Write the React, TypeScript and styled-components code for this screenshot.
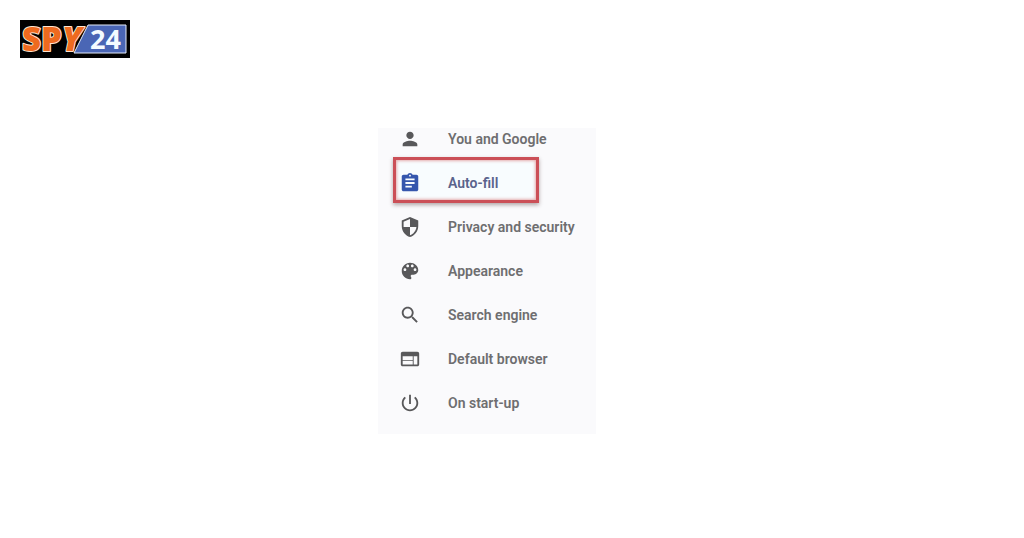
import React from "react";
import styled, { createGlobalStyle } from "styled-components";

const GlobalStyle = createGlobalStyle`
  body {
    margin: 0;
    background: #ffffff;
    font-family: Roboto, "Liberation Sans", sans-serif;
  }
`;

const Header = styled.header`
  padding: 20px;
`;

const LogoLink = styled.a`
  display: block;
  width: 110px;
  height: 38px;
  background: #000000;
`;

const LogoDrawing = styled.svg`
  display: block;
  overflow: visible;
  font-family: "Open Sans", "Noto Sans", sans-serif;
  font-weight: 700;
`;

const LogoName = styled.text`
  fill: #ee6a1f;
  stroke: #ffe6d2;
  stroke-width: 2px;
  stroke-linejoin: round;
  paint-order: stroke;
  font-size: 33px;
  font-weight: 800;
`;

const LogoNumber = styled.text`
  fill: #f4fbff;
  font-size: 27px;
`;

const Main = styled.main`
  display: flex;
  justify-content: center;
  padding: 50px 50px 50px 0;
`;

const Panel = styled.nav`
  width: 218px;
  background: #fafafc;
`;

const MenuList = styled.ul`
  display: flex;
  flex-direction: column;
  gap: 22px;
  margin: 0;
  padding: 0 0 20px 21px;
  list-style: none;
`;

const MenuLink = styled.a<{ $active?: boolean }>`
  position: relative;
  display: flex;
  align-items: center;
  gap: 27px;
  height: 22px;
  color: ${(p) => (p.$active ? "#5a638c" : "#6e6e70")};
  font-size: 14px;
  font-weight: 600;
  line-height: 22px;
  text-decoration: none;
  white-space: nowrap;
`;

const Highlight = styled.span`
  position: absolute;
  top: -15px;
  left: -6px;
  box-sizing: border-box;
  width: 146px;
  height: 46px;
  border: 3px solid #cb4f57;
  background: #f8fcfe;
  box-shadow: 0 2px 4px rgba(70, 40, 40, 0.4), inset 0 0 3px 1px rgba(215, 110, 110, 0.55);
`;

const Icon = styled.svg<{ $active?: boolean }>`
  position: relative;
  flex: none;
  width: 22px;
  height: 22px;
  fill: ${(p) => (p.$active ? "#3556ad" : "#58585a")};
`;

const Label = styled.span`
  position: relative;
`;

const items = [
  {
    label: "You and Google",
    path: "M12 12c2.21 0 4-1.79 4-4s-1.79-4-4-4-4 1.79-4 4 1.79 4 4 4zm0 2c-2.67 0-8 1.34-8 4v2h16v-2c0-2.66-5.33-4-8-4z",
  },
  {
    label: "Auto-fill",
    active: true,
    path: "M19 3h-4.18C14.4 1.84 13.3 1 12 1c-1.3 0-2.4.84-2.82 2H5c-1.1 0-2 .9-2 2v14c0 1.1.9 2 2 2h14c1.1 0 2-.9 2-2V5c0-1.1-.9-2-2-2zm-7 0c.55 0 1 .45 1 1s-.45 1-1 1-1-.45-1-1 .45-1 1-1zm2 14H7v-2h7v2zm3-4H7v-2h10v2zm0-4H7V7h10v2z",
  },
  {
    label: "Privacy and security",
    path: "M12 1L3 5v6c0 5.55 3.84 10.74 9 12 5.16-1.26 9-6.45 9-12V5l-9-4zm0 10.99h7c-.53 4.12-3.28 7.79-7 8.94V12H5V6.3l7-3.11v8.8z",
  },
  {
    label: "Appearance",
    path: "M12 3c-4.97 0-9 4.03-9 9s4.03 9 9 9c.83 0 1.5-.67 1.5-1.5 0-.39-.15-.74-.39-1.01-.23-.26-.38-.61-.38-.99 0-.83.67-1.5 1.5-1.5H16c2.76 0 5-2.24 5-5 0-4.42-4.03-8-9-8zm-5.5 9c-.83 0-1.5-.67-1.5-1.5S5.67 9 6.5 9 8 9.67 8 10.5 7.33 12 6.5 12zm3-4C8.67 8 8 7.33 8 6.5S8.67 5 9.5 5s1.5.67 1.5 1.5S10.33 8 9.5 8zm5 0c-.83 0-1.5-.67-1.5-1.5S13.67 5 14.5 5s1.5.67 1.5 1.5S15.33 8 14.5 8zm3 4c-.83 0-1.5-.67-1.5-1.5S16.67 9 17.5 9s1.5.67 1.5 1.5-.67 1.5-1.5 1.5z",
  },
  {
    label: "Search engine",
    path: "M15.5 14h-.79l-.28-.27C15.41 12.59 16 11.11 16 9.5 16 5.91 13.09 3 9.5 3S3 5.91 3 9.5 5.91 16 9.5 16c1.61 0 3.09-.59 4.23-1.57l.27.28v.79l5 4.99L20.49 19l-4.99-5zm-6 0C7.01 14 5 11.99 5 9.5S7.01 5 9.5 5 14 7.01 14 9.5 11.99 14 9.5 14z",
  },
  {
    label: "Default browser",
    path: "M20 4H4c-1.1 0-1.99.9-1.99 2L2 18c0 1.1.9 2 2 2h16c1.1 0 2-.9 2-2V6c0-1.1-.9-2-2-2zm-5 14H4v-4h11v4zm0-5H4V9h11v4zm5 5h-4V9h4v9z",
  },
  {
    label: "On start-up",
    path: "M13 3h-2v10h2V3zm4.83 2.17l-1.42 1.42C17.99 7.86 19 9.81 19 12c0 3.87-3.13 7-7 7s-7-3.13-7-7c0-2.19 1.01-4.14 2.58-5.42L6.17 5.17C4.23 6.82 3 9.26 3 12c0 4.97 4.03 9 9 9s9-4.03 9-9c0-2.74-1.23-5.18-3.17-6.83z",
  },
];

function Logo() {
  return (
    <LogoDrawing width="110" height="38" viewBox="0 0 110 38" role="img" aria-label="SPY 24">
      <LogoName x="2" y="31">
        SP<tspan fontStyle="italic">Y</tspan>
      </LogoName>
      <path d="M68 5H106V33H54Z" fill="#4a66b5" stroke="#e4ebf8" strokeWidth="1" />
      <LogoNumber x="70" y="29">24</LogoNumber>
    </LogoDrawing>
  );
}

export default function App() {
  return (
    <>
      <GlobalStyle />
      <Header>
        <LogoLink href="#">
          <Logo />
        </LogoLink>
      </Header>
      <Main>
        <Panel aria-label="Settings">
          <MenuList>
            {items.map(({ label, path, active }) => (
              <li key={label}>
                <MenuLink href="#" $active={active} aria-current={active ? "page" : undefined}>
                  {active && <Highlight />}
                  <Icon viewBox="0 0 24 24" $active={active} aria-hidden="true">
                    <path d={path} />
                  </Icon>
                  <Label>{label}</Label>
                </MenuLink>
              </li>
            ))}
          </MenuList>
        </Panel>
      </Main>
    </>
  );
}
